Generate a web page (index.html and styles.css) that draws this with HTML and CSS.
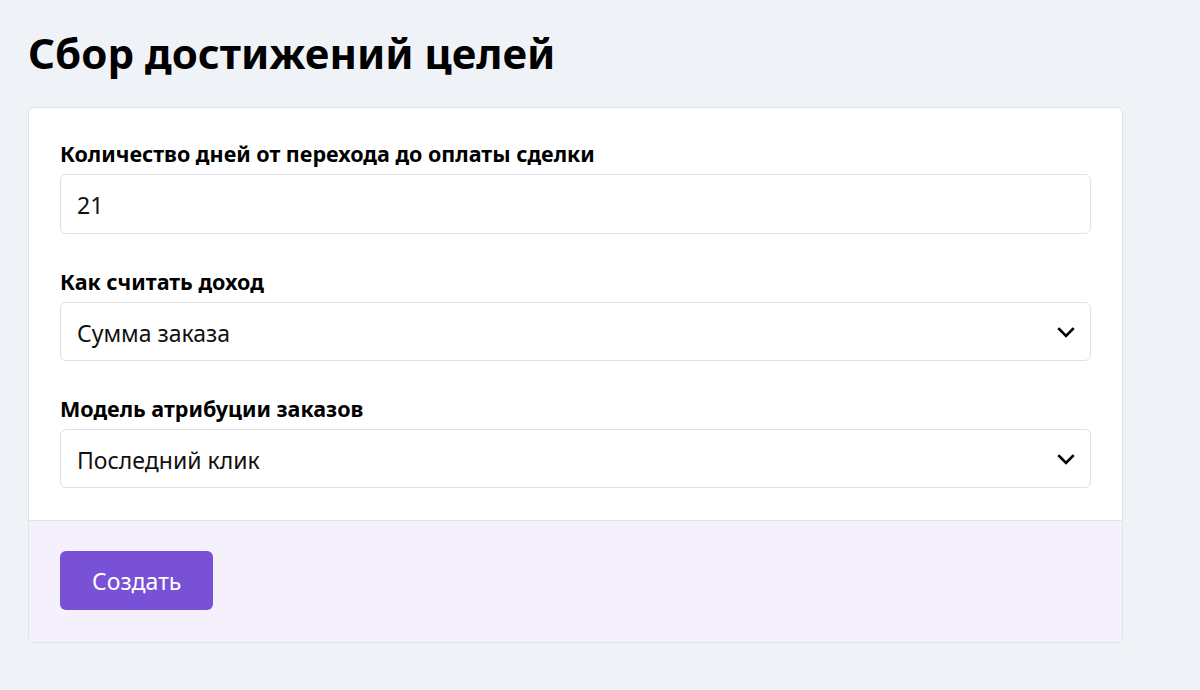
FILE: index.html
```html
<!DOCTYPE html>
<html lang="ru">
<head>
    <meta charset="UTF-8">
    <meta name="viewport" content="width=device-width, initial-scale=1.0">
    <title>Сбор достижений целей</title>
    <link rel="stylesheet" href="styles.css">
</head>
<body>
    <h1>Сбор достижений целей</h1>
    <form class="card">
        <div class="card-body">
            <div class="field">
                <label for="days">Количество дней от перехода до оплаты сделки</label>
                <input id="days" type="text" value="21">
            </div>
            <div class="field">
                <label for="income">Как считать доход</label>
                <div class="select">
                    <select id="income">
                        <option>Сумма заказа</option>
                    </select>
                    <svg class="chevron" viewBox="0 0 20 20"><path d="M3 6.5l7 7 7-7" /></svg>
                </div>
            </div>
            <div class="field">
                <label for="model">Модель атрибуции заказов</label>
                <div class="select">
                    <select id="model">
                        <option>Последний клик</option>
                    </select>
                    <svg class="chevron" viewBox="0 0 20 20"><path d="M3 6.5l7 7 7-7" /></svg>
                </div>
            </div>
        </div>
        <div class="card-footer">
            <button type="button" class="btn">Создать</button>
        </div>
    </form>
</body>
</html>
```

FILE: styles.css
```css
body {
    margin: 0;
    padding: 0 77px 0 28px;
    background: #eff2f6;
    font-family: "Noto Sans", "Open Sans", sans-serif;
    color: #000;
}
h1 {
    margin: 0;
    padding: 24px 0 25px;
    font-size: 42px;
    line-height: 58px;
    font-weight: 700;
}
.card {
    background: #fff;
    border: 1px solid #e1e1e6;
    border-radius: 6px;
    overflow: hidden;
}
.card-body {
    padding: 32px 31px 32px;
    display: flex;
    flex-direction: column;
    gap: 34px;
}
.field {
    display: flex;
    flex-direction: column;
    gap: 6px;
}
.field label {
    font-size: 21.5px;
    font-weight: 700;
    line-height: 28px;
}
.field input,
.field select {
    width: 100%;
    box-sizing: border-box;
    height: 60px;
    padding: 2px 16px 0;
    border: 1px solid #e0e0e4;
    border-radius: 6px;
    background: #fff;
    font-family: inherit;
    font-size: 23px;
    color: #111;
    outline: none;
}
.field select {
    appearance: none;
    -webkit-appearance: none;
    height: 59px;
}
.select {
    position: relative;
}
.chevron {
    position: absolute;
    right: 14px;
    top: 19px;
    width: 22px;
    height: 22px;
    fill: none;
    stroke: #000;
    stroke-width: 2.5;
    pointer-events: none;
}
.card-footer {
    background: #f4f1fd;
    border-top: 1px solid #e4e2ea;
    padding: 30px 31px 32px;
}
.btn {
    height: 59px;
    padding: 0 32px;
    border: none;
    border-radius: 6px;
    background: #7851d6;
    color: #fff;
    font-family: inherit;
    font-size: 23px;
    cursor: pointer;
}
```
